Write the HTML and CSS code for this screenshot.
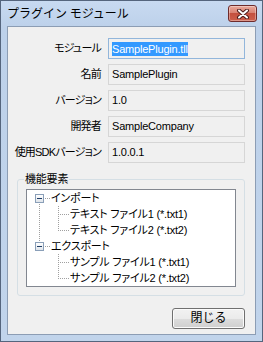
FILE: index.html
```html
<!DOCTYPE html>
<html lang="ja">
<head>
  <meta charset="UTF-8">
  <title>プラグイン モジュール</title>
  <link rel="stylesheet" href="styles.css">
</head>
<body>
  <div class="window">
    <div class="titlebar">
      <span class="title">プラグイン モジュール</span>
      <button class="close-btn">
        <svg width="14" height="10" viewBox="0 0 14 10">
          <path d="M3 1.5 L11 8.5 M11 1.5 L3 8.5" stroke="#4b1c1c" stroke-width="4" stroke-linecap="round"/>
          <path d="M3 1.5 L11 8.5 M11 1.5 L3 8.5" stroke="#ffffff" stroke-width="2" stroke-linecap="round"/>
        </svg>
      </button>
    </div>

    <div class="client">
      <div class="props">
        <label>モジュール</label>
        <div class="field focused"><span class="selected">SamplePlugin.tll</span></div>
        <label>名前</label>
        <div class="field">SamplePlugin</div>
        <label>バージョン</label>
        <div class="field">1.0</div>
        <label>開発者</label>
        <div class="field">SampleCompany</div>
        <label>使用SDKバージョン</label>
        <div class="field">1.0.0.1</div>
      </div>

      <fieldset class="group">
        <legend>機能要素</legend>
        <div class="tree">
          <div class="node">
            <span class="gutter root first"><span class="toggle"></span></span>
            <span class="text">インポート</span>
          </div>
          <div class="node">
            <span class="indent pipe"></span>
            <span class="gutter tee"></span>
            <span class="text">テキスト ファイル1 (*.txt1)</span>
          </div>
          <div class="node">
            <span class="indent pipe"></span>
            <span class="gutter ell"></span>
            <span class="text">テキスト ファイル2 (*.txt2)</span>
          </div>
          <div class="node">
            <span class="gutter root last"><span class="toggle"></span></span>
            <span class="text">エクスポート</span>
          </div>
          <div class="node">
            <span class="indent"></span>
            <span class="gutter tee"></span>
            <span class="text">サンプル ファイル1 (*.txt1)</span>
          </div>
          <div class="node">
            <span class="indent"></span>
            <span class="gutter ell"></span>
            <span class="text">サンプル ファイル2 (*.txt2)</span>
          </div>
        </div>
      </fieldset>

      <div class="actions">
        <button class="btn">閉じる</button>
      </div>
    </div>
  </div>
</body>
</html>
```

FILE: styles.css
```css
* {
  box-sizing: border-box;
}

body {
  margin: 0;
  font-family: "Liberation Sans", "Noto Sans CJK JP", sans-serif;
  font-size: 11px;
  font-feature-settings: "palt";
  letter-spacing: -0.2px;
  color: #000;
}

.window {
  width: 263px;
  height: 342px;
  border: 1px solid #55657d;
  background: linear-gradient(#c8daf1, #bdd1ea 26px, #c1d4eb);
  padding: 0 6px 6px;
  display: flex;
  flex-direction: column;
}

/* Title bar */
.titlebar {
  height: 25px;
  display: flex;
  align-items: flex-start;
  justify-content: space-between;
}

.title {
  font-family: "Noto Sans CJK JP", sans-serif;
  font-feature-settings: normal;
  font-size: 12px;
  line-height: 14px;
  margin-top: 5px;
  letter-spacing: 0;
}

.close-btn {
  width: 29px;
  height: 17px;
  margin: 4px -1px 0 0;
  padding: 0;
  border: 1px solid #6e2b2b;
  border-radius: 3px;
  background: linear-gradient(#e9a99b, #d98273 45%, #c4503f 50%, #cd5f4c);
  box-shadow: inset 0 0 0 1px rgba(255, 255, 255, 0.35);
  display: flex;
  align-items: center;
  justify-content: center;
}

/* Client area */
.client {
  flex: 1;
  border: 1px solid #8c9db4;
  background: #f0f0f0;
  padding: 11px 10px 0 0;
  display: flex;
  flex-direction: column;
}

.props {
  display: grid;
  grid-template-columns: 94px 137px;
  grid-auto-rows: 21px;
  column-gap: 6px;
  row-gap: 5px;
}

.props label {
  text-align: right;
  line-height: 21px;
  white-space: nowrap;
  letter-spacing: -0.8px;
  padding-right: 1px;
}

.field {
  border: 1px solid #d6d6d6;
  background: #f0f0f0;
  padding: 0 3px;
  line-height: 19px;
  white-space: nowrap;
}

.field.focused {
  border-color: #92b6db;
}

.selected {
  background: #3399ff;
  color: #fff;
  display: inline-block;
  line-height: 14px;
  vertical-align: middle;
}

/* Group box */
.group {
  margin: 9px 0 0 9px;
  padding: 3px 8px 8px;
  border: 1px solid #d5dfe5;
  border-radius: 3px;
  min-width: 0;
}

.group legend {
  padding: 0 1px;
  margin-left: -2px;
  line-height: 14px;
}

.tree {
  border: 1px solid #828790;
  background: #fff;
}

.node {
  display: flex;
  height: 16px;
  line-height: 16px;
  white-space: nowrap;
}

.indent {
  width: 19px;
  flex: none;
}

.gutter {
  width: 24px;
  flex: none;
  display: flex;
  align-items: flex-start;
  background-repeat: no-repeat;
}

/* dotted tree lines */
.pipe {
  background: repeating-linear-gradient(to bottom, #a0a0a0 0 1px, transparent 1px 2px) 12px 0 / 1px 100% no-repeat;
}

.tee {
  background:
    repeating-linear-gradient(to bottom, #a0a0a0 0 1px, transparent 1px 2px) 12px 0 / 1px 100% no-repeat,
    repeating-linear-gradient(to right, #a0a0a0 0 1px, transparent 1px 2px) 14px 8px / 9px 1px no-repeat;
}

.ell {
  background:
    repeating-linear-gradient(to bottom, #a0a0a0 0 1px, transparent 1px 2px) 12px 0 / 1px 9px no-repeat,
    repeating-linear-gradient(to right, #a0a0a0 0 1px, transparent 1px 2px) 14px 8px / 9px 1px no-repeat;
}

.root.first {
  background:
    repeating-linear-gradient(to bottom, #a0a0a0 0 1px, transparent 1px 2px) 12px 14px / 1px 2px no-repeat,
    repeating-linear-gradient(to right, #a0a0a0 0 1px, transparent 1px 2px) 18px 8px / 5px 1px no-repeat;
}

.root.last {
  background:
    repeating-linear-gradient(to bottom, #a0a0a0 0 1px, transparent 1px 2px) 12px 0 / 1px 3px no-repeat,
    repeating-linear-gradient(to right, #a0a0a0 0 1px, transparent 1px 2px) 18px 8px / 5px 1px no-repeat;
}

.toggle {
  width: 9px;
  height: 9px;
  margin: 4px 0 0 8px;
  border: 1px solid #8a9fb8;
  background:
    linear-gradient(#1e3d66, #1e3d66) center / 5px 1px no-repeat,
    linear-gradient(#ffffff, #dfe4ea);
}

/* Buttons */
.actions {
  display: flex;
  justify-content: flex-end;
  margin-top: 12px;
}

.btn {
  width: 73px;
  height: 21px;
  padding: 0;
  border: 1px solid #707070;
  border-radius: 3px;
  background: linear-gradient(#f2f2f2, #ebebeb 50%, #dddddd 50%, #cfcfcf);
  box-shadow: inset 0 0 0 1px #fbfbfb;
  font-family: inherit;
  font-size: 12px;
  line-height: 19px;
  color: #000;
}
```
